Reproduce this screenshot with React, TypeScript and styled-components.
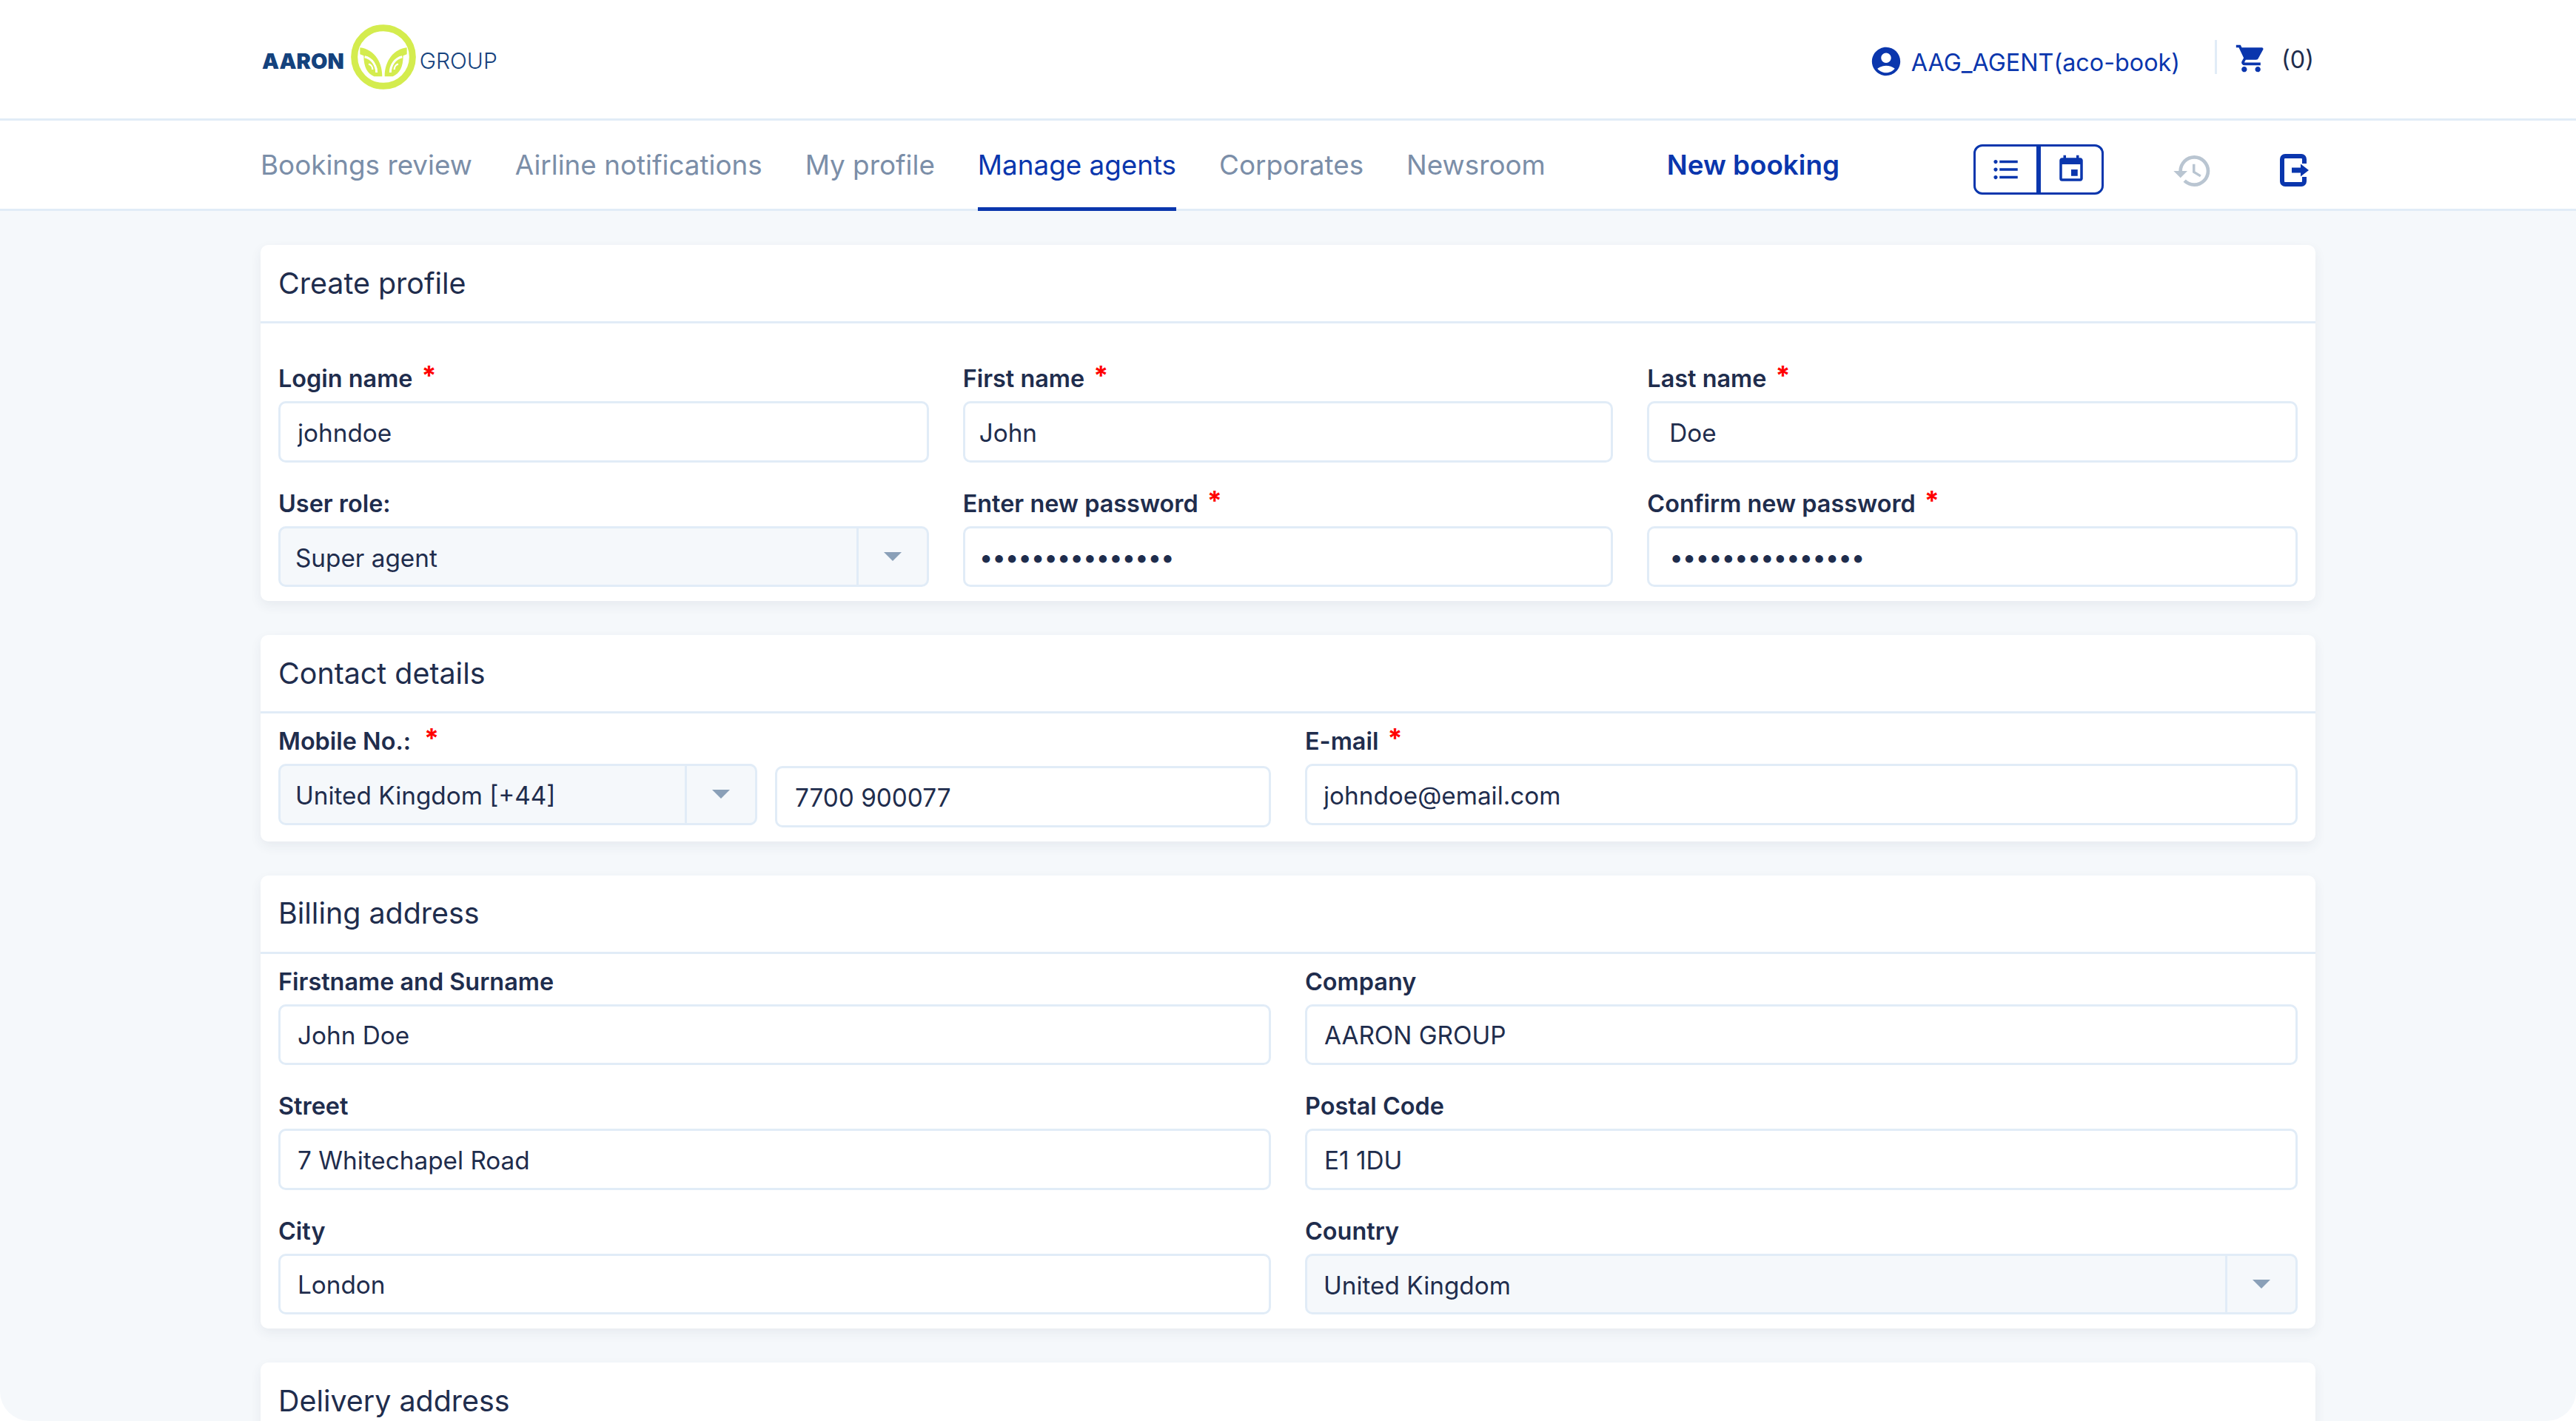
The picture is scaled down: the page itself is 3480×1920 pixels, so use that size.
import React from 'react';
import styled, { createGlobalStyle } from 'styled-components';
import {
  MdAccountCircle,
  MdShoppingCart,
  MdFormatListBulleted,
  MdEvent,
  MdHistory,
} from 'react-icons/md';

const INK = '#1f2d4d';
const BLUE = '#0a36ad';
const LINE = '#e1ecf7';
const PAGE = '#f5f8fb';

const GlobalStyle = createGlobalStyle`
  html, body {
    margin: 0;
    padding: 0;
    background: #fff;
  }
  * {
    box-sizing: border-box;
  }
`;

const Screen = styled.div`
  width: 3480px;
  height: 1920px;
  overflow: hidden;
  background: ${PAGE};
  border-radius: 0 0 40px 40px;
  font-family: Inter, 'Noto Sans', sans-serif;
  color: ${INK};
`;

const TopBar = styled.header`
  height: 163px;
  padding: 0 354px 0 354px;
  display: flex;
  align-items: center;
  justify-content: space-between;
  background: #fff;
  border-bottom: 3px solid ${LINE};
`;

const Logo = styled.div`
  display: flex;
  align-items: center;
  margin-top: -6px;
`;

const LogoWord = styled.span<{ $light?: boolean }>`
  font-size: ${(p) => (p.$light ? 30 : 29)}px;
  line-height: 1;
  margin-top: 10px;
  color: #14427d;
  font-weight: ${(p) => (p.$light ? 300 : 900)};
`;

const LogoMark = styled.svg`
  width: 88px;
  height: 88px;
  margin: 0 5px 0 9px;
`;

const Account = styled.div`
  display: flex;
  align-items: center;
`;

const UserName = styled.span`
  display: flex;
  align-items: center;
  gap: 11px;
  font-size: 32.3px;
  line-height: 46px;
  color: ${BLUE};
  margin-top: 9px;
`;

const UserIcon = styled(MdAccountCircle)`
  margin-top: -4px;
`;

const BarDivider = styled.span`
  width: 3px;
  height: 46px;
  margin: -6px 24px 0 47px;
  background: ${LINE};
`;

const CartCount = styled.span`
  font-size: 32.3px;
  line-height: 44px;
  margin-left: 19px;
  margin-top: 1px;
`;

const CartIcon = styled(MdShoppingCart)`
  color: ${BLUE};
  margin-top: -2px;
`;

const NavBar = styled.nav`
  height: 122px;
  padding: 0 352px;
  display: flex;
  align-items: stretch;
  white-space: nowrap;
  background: #fff;
  border-bottom: 3px solid ${LINE};
`;

const NavLinks = styled.div`
  display: flex;
  align-items: stretch;
  gap: 58px;
`;

const NavLink = styled.a<{ $active?: boolean }>`
  display: flex;
  align-items: center;
  margin-bottom: -3px;
  padding-bottom: 1px;
  font-size: 36.8px;
  color: ${(p) => (p.$active ? BLUE : '#7b8ea8')};
  border-bottom: 5px solid ${(p) => (p.$active ? BLUE : 'transparent')};
  border-top: 3px solid transparent;
`;

const NewBooking = styled.a`
  display: flex;
  align-items: center;
  margin-left: 164px;
  font-size: 36.8px;
  font-weight: 600;
  color: ${BLUE};
`;

const ViewToggle = styled.div`
  display: flex;
  align-self: center;
  height: 68px;
  margin-left: 181px;
  margin-top: 13px;
`;

const ToggleButton = styled.button<{ $side: 'left' | 'right' }>`
  width: 88px;
  height: 68px;
  padding: 0;
  display: flex;
  align-items: center;
  justify-content: center;
  background: #fff;
  color: ${BLUE};
  border: 3px solid ${BLUE};
  border-radius: ${(p) => (p.$side === 'left' ? '12px 0 0 12px' : '0 12px 12px 0')};
`;

const HistoryIcon = styled(MdHistory)`
  align-self: center;
  margin: 17px 0 0 92px;
  color: #b9c5d1;
`;

const ExitIcon = styled.svg`
  align-self: center;
  width: 40px;
  height: 44px;
  margin: 15px 0 0 90px;
  color: ${BLUE};
`;

const Content = styled.main`
  padding: 46px 352px 0;
  display: flex;
  flex-direction: column;
  gap: 46px;
`;

const Card = styled.section`
  background: #fff;
  border-radius: 10px;
  box-shadow: 0 6px 16px rgba(40, 60, 90, 0.07);
`;

const CardTitle = styled.h2`
  margin: 0;
  height: 106px;
  padding: 0 24px;
  display: flex;
  align-items: center;
  font-size: 39.4px;
  font-weight: 400;
  color: ${INK};
  border-bottom: 3px solid ${LINE};
`;

const CardBody = styled.div<{ $top: number; $cols: number }>`
  padding: ${(p) => p.$top}px 24px 19px;
  display: grid;
  grid-template-columns: repeat(${(p) => p.$cols}, 1fr);
  column-gap: 46px;
  row-gap: 38px;
`;

const Field = styled.div`
  min-width: 0;
`;

const Label = styled.label`
  display: block;
  height: 36px;
  margin-bottom: 12px;
  font-size: 32.4px;
  line-height: 35px;
  font-weight: 600;
  white-space: nowrap;
  color: ${INK};
`;

const Required = styled.span<{ $wide?: boolean }>`
  margin-left: ${(p) => (p.$wide ? 18 : 12)}px;
  font-size: 36px;
  font-weight: 700;
  color: #f00;
  vertical-align: 3px;
  line-height: 0;
`;

const TextInput = styled.input<{ $shift?: boolean; $pad: number }>`
  display: block;
  width: 100%;
  min-width: 0;
  height: 82.5px;
  margin-top: ${(p) => (p.$shift ? 3 : 0)}px;
  padding: 3px ${(p) => p.$pad}px 0;
  font-family: Inter, 'Noto Sans', sans-serif;
  font-size: 33.3px;
  color: ${INK};
  background: #fff;
  border: 3px solid ${LINE};
  border-radius: 10px;
  outline: none;

  &[type='password'] {
    letter-spacing: -1.2px;
  }
`;

const SelectBox = styled.div<{ $width?: number }>`
  display: flex;
  align-items: stretch;
  flex: ${(p) => (p.$width ? `0 0 ${p.$width}px` : '1')};
  height: 82.5px;
  background: ${PAGE};
  border: 3px solid ${LINE};
  border-radius: 10px;
`;

const SelectValue = styled.span<{ $pad: number }>`
  flex: 1;
  padding: 4px ${(p) => p.$pad}px 0;
  display: flex;
  align-items: center;
  font-size: 33.3px;
`;

const SelectHandle = styled.span`
  flex: 0 0 95px;
  display: flex;
  align-items: center;
  justify-content: center;
  border-left: 3px solid ${LINE};
`;

const Caret = styled.span`
  width: 0;
  height: 0;
  border-left: 12px solid transparent;
  border-right: 12px solid transparent;
  border-top: 12px solid #8aa0b8;
`;

const PhoneRow = styled.div`
  display: flex;
  align-items: flex-start;
  gap: 24px;
`;

const Select = ({
  value,
  width,
  pad = 20,
}: {
  value: string;
  width?: number;
  pad?: number;
}) => (
  <SelectBox $width={width}>
    <SelectValue $pad={pad}>{value}</SelectValue>
    <SelectHandle>
      <Caret />
    </SelectHandle>
  </SelectBox>
);

const Input = ({
  value,
  type = 'text',
  shift,
  pad = 23,
}: {
  value: string;
  type?: string;
  shift?: boolean;
  pad?: number;
}) => <TextInput type={type} defaultValue={value} readOnly $shift={shift} $pad={pad} />;

const Leaf = () => (
  <g>
    <path
      d="M555 195C605 200 645 245 645 312L612 312C585 300 570 275 570 228C565 226 560 224 555 222Z"
      fill="#d4ec4e"
    />
    <path d="M574 232C604 238 622 268 622 296" fill="none" stroke="#fff" strokeWidth="9" />
    <path d="M590 262C600 264 606 274 606 284" fill="none" stroke="#fff" strokeWidth="7" />
  </g>
);

const navItems = [
  'Bookings review',
  'Airline notifications',
  'My profile',
  'Manage agents',
  'Corporates',
  'Newsroom',
];

const App = () => (
  <Screen>
    <GlobalStyle />
    <TopBar>
      <Logo>
        <LogoWord>AARON</LogoWord>
        <LogoMark viewBox="518 101 264 264">
          <circle cx="650" cy="233" r="118" fill="none" stroke="#d4ec4e" strokeWidth="27" />
          <Leaf />
          <g transform="translate(1300 0) scale(-1 1)">
            <Leaf />
          </g>
        </LogoMark>
        <LogoWord $light>GROUP</LogoWord>
      </Logo>
      <Account>
        <UserName>
          <UserIcon size={46} />
          AAG_AGENT(aco-book)
        </UserName>
        <BarDivider />
        <CartIcon size={44} />
        <CartCount>(0)</CartCount>
      </Account>
    </TopBar>

    <NavBar>
      <NavLinks>
        {navItems.map((item) => (
          <NavLink key={item} $active={item === 'Manage agents'}>
            {item}
          </NavLink>
        ))}
      </NavLinks>
      <NewBooking>New booking</NewBooking>
      <ViewToggle>
        <ToggleButton $side="left">
          <MdFormatListBulleted size={42} />
        </ToggleButton>
        <ToggleButton $side="right">
          <MdEvent size={42} />
        </ToggleButton>
      </ViewToggle>
      <HistoryIcon size={56} />
      <ExitIcon viewBox="0 0 40 44">
        <path
          d="M33 13V7a4 4 0 0 0-4-4H7a4 4 0 0 0-4 4v30a4 4 0 0 0 4 4h22a4 4 0 0 0 4-4v-6"
          fill="none"
          stroke="currentColor"
          strokeWidth="6"
        />
        <path d="M16 18.500h12V13.500l11 8.500-11 8.500v-5H16z" fill="currentColor" />
      </ExitIcon>
    </NavBar>

    <Content>
      <Card>
        <CardTitle>Create profile</CardTitle>
        <CardBody $top={57} $cols={3}>
          <Field>
            <Label>Login name<Required>*</Required></Label>
            <Input value="johndoe" />
          </Field>
          <Field>
            <Label>First name<Required>*</Required></Label>
            <Input value="John" pad={19} />
          </Field>
          <Field>
            <Label>Last name<Required>*</Required></Label>
            <Input value="Doe" pad={27} />
          </Field>
          <Field>
            <Label>User role:</Label>
            <Select value="Super agent" />
          </Field>
          <Field>
            <Label>Enter new password<Required>*</Required></Label>
            <Input value="johndoe12345678" type="password" pad={19} />
          </Field>
          <Field>
            <Label>Confirm new password<Required>*</Required></Label>
            <Input value="johndoe12345678" type="password" pad={27} />
          </Field>
        </CardBody>
      </Card>

      <Card>
        <CardTitle>Contact details</CardTitle>
        <CardBody $top={20} $cols={2}>
          <Field>
            <Label>Mobile No.:<Required $wide>*</Required></Label>
            <PhoneRow>
              <Select value="United Kingdom [+44]" width={647} />
              <Input value="7700 900077" shift pad={24} />
            </PhoneRow>
          </Field>
          <Field>
            <Label>E-mail<Required>*</Required></Label>
            <Input value="johndoe@email.com" shift pad={22} />
          </Field>
        </CardBody>
      </Card>

      <Card>
        <CardTitle>Billing address</CardTitle>
        <CardBody $top={20} $cols={2}>
          <Field>
            <Label>Firstname and Surname</Label>
            <Input value="John Doe" />
          </Field>
          <Field>
            <Label>Company</Label>
            <Input value="AARON GROUP" />
          </Field>
          <Field>
            <Label>Street</Label>
            <Input value="7 Whitechapel Road" />
          </Field>
          <Field>
            <Label>Postal Code</Label>
            <Input value="E1 1DU" />
          </Field>
          <Field>
            <Label>City</Label>
            <Input value="London" />
          </Field>
          <Field>
            <Label>Country</Label>
            <Select value="United Kingdom" pad={22} />
          </Field>
        </CardBody>
      </Card>

      <Card>
        <CardTitle>Delivery address</CardTitle>
      </Card>
    </Content>
  </Screen>
);

export default App;
